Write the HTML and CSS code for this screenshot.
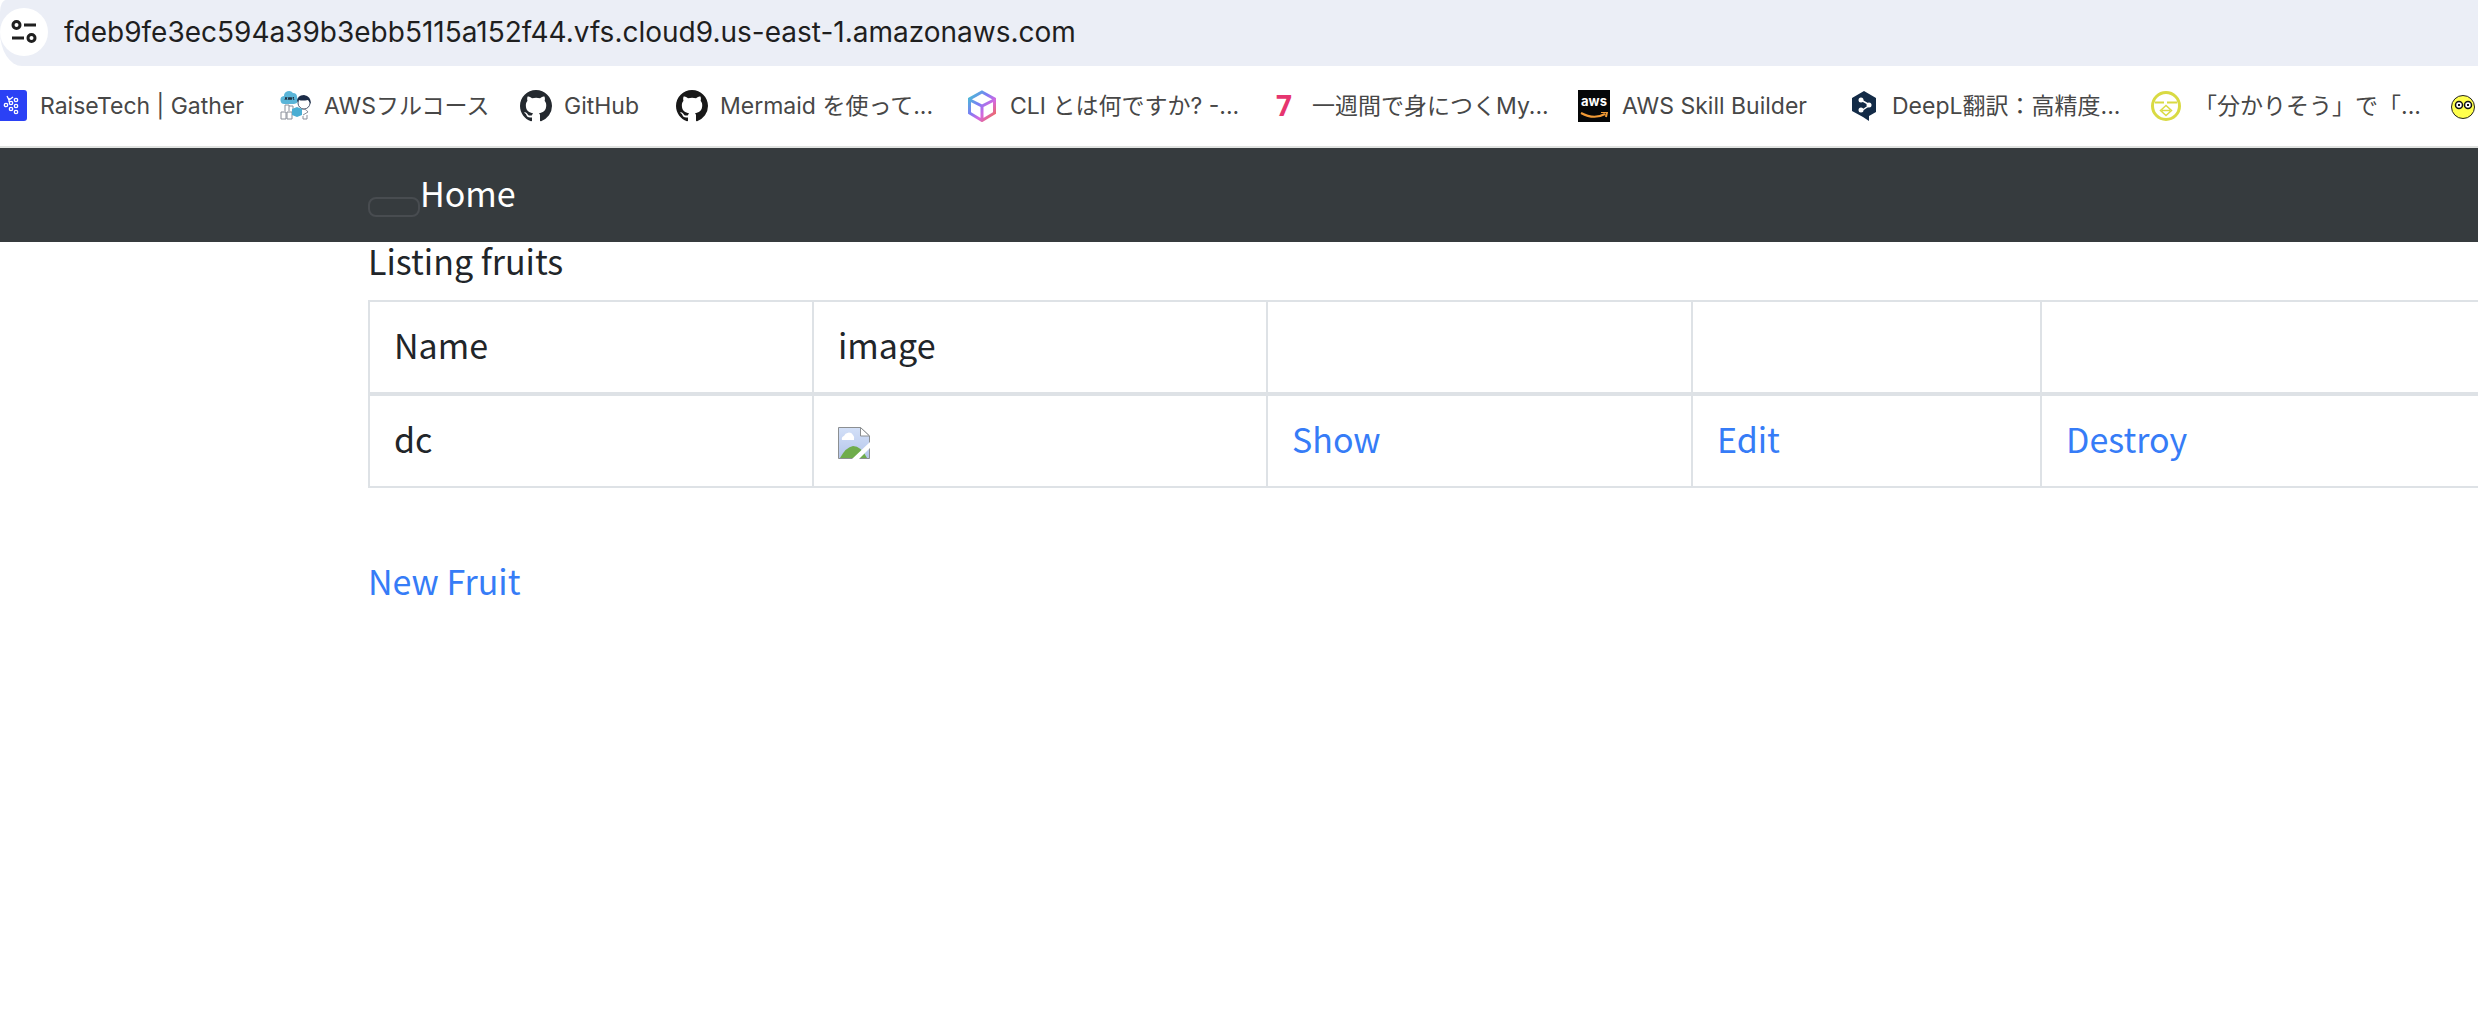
FILE: index.html
```html
<!DOCTYPE html>
<html lang="ja">
<head>
<meta charset="utf-8">
<title>Fruits</title>
<link rel="stylesheet" href="styles.css">
</head>
<body>
<svg class="defs" width="0" height="0" aria-hidden="true">
  <symbol id="octocat" viewBox="0 0 16 16"><path d="M8 0C3.58 0 0 3.58 0 8c0 3.54 2.29 6.53 5.47 7.59.4.07.55-.17.55-.38 0-.19-.01-.82-.01-1.49-2.01.37-2.53-.49-2.69-.94-.09-.23-.48-.94-.82-1.13-.28-.15-.68-.52-.01-.53.63-.01 1.08.58 1.23.82.72 1.21 1.87.87 2.33.66.07-.52.28-.87.51-1.07-1.78-.2-3.64-.89-3.64-3.95 0-.87.31-1.59.82-2.15-.08-.2-.36-1.02.08-2.12 0 0 .67-.21 2.2.82.64-.18 1.32-.27 2-.27s1.36.09 2 .27c1.53-1.04 2.2-.82 2.2-.82.44 1.1.16 1.92.08 2.12.51.56.82 1.27.82 2.15 0 3.07-1.87 3.75-3.65 3.95.29.25.54.73.54 1.48 0 1.07-.01 1.93-.01 2.2 0 .21.15.46.55.38A8 8 0 0 0 16 8c0-4.42-3.58-8-8-8z"/></symbol>
</svg>

<div class="address-bar">
  <button class="site-info" type="button" aria-label="Site information">
    <svg viewBox="0 0 26 24" width="26" height="24" fill="none" stroke="#1f1f1f" stroke-width="3"><circle cx="5.500" cy="5" r="3.500"/><path d="M13 5h12M1 18h12"/><circle cx="20.500" cy="18" r="3.500"/></svg>
  </button>
  <input class="url" type="text" aria-label="Address" value="fdeb9fe3ec594a39b3ebb5115a152f44.vfs.cloud9.us-east-1.amazonaws.com">
</div>

<nav class="bookmarks" aria-label="Bookmarks">
  <a href="#">
    <svg class="icon" viewBox="0 0 32 32"><rect x="-4" y="0" width="35" height="31" rx="3" fill="#2b41f5"/><g fill="none" stroke="#fff" stroke-width="1.300"><circle cx="10" cy="15" r="1.700"/><circle cx="15" cy="13" r="1.700"/><circle cx="15" cy="19" r="1.700"/><circle cx="20" cy="10" r="1.700"/><circle cx="20" cy="16" r="1.700"/><circle cx="20" cy="22" r="1.700"/><path d="M11 6l2 4 4-3M13 8v4"/></g></svg>
    <span>RaiseTech | Gather</span></a>
  <a href="#">
    <svg class="icon" viewBox="0 0 32 32"><path d="M5 14a4 4 0 0 1-1-8 5 5 0 0 1 9-3 4 4 0 0 1 4 4q3 6-3 7z" fill="#5bb5d8"/><path d="M5 10l1-3 1 3M8 7l1 3 1-3 1 3 1-3M14 7l-1 1 1 2" stroke="#234" fill="none"/><circle cx="24" cy="13" r="6" fill="#fff" stroke="#4a566c"/><path d="M17 12q0-7 7-7 7 1 7 9l-3-4q-6 1-9 0z" fill="#1c2c48"/><path d="M1 29v-7h5v7zM7 22h5v7H7zM5 21v-6h4v6M9 16h4v6" fill="#fff" stroke="#8a8f9a"/><path d="M12 19l5-2 5 2v6l-5 2-5-2z" fill="#4baed3"/><path d="M22 19q5 0 6 3l-5 3M23 26v3h4v-4" fill="none" stroke="#8a8f9a"/></svg>
    <span>AWSフルコース</span></a>
  <a href="#">
    <svg class="icon" viewBox="0 0 32 32" fill="#24292f"><use href="#octocat"/></svg>
    <span>GitHub</span></a>
  <a href="#">
    <svg class="icon" viewBox="0 0 32 32" fill="#181818"><use href="#octocat"/></svg>
    <span>Mermaid を使って...</span></a>
  <a href="#">
    <svg class="icon" viewBox="0 0 32 32"><defs><linearGradient id="cube" x1="0" y1="0" x2="1" y2="1"><stop offset="0" stop-color="#3fc8d0"/><stop offset=".4" stop-color="#7d7bf5"/><stop offset=".65" stop-color="#d468e0"/><stop offset="1" stop-color="#f5693f"/></linearGradient></defs><path d="M16 2l12.500 7v14L16 30.500 3.500 23V9zM4 10l12 6 12-6M16 16v14" fill="none" stroke="url(#cube)" stroke-width="3"/></svg>
    <span>CLI とは何ですか? -...</span></a>
  <a href="#">
    <span class="icon seven" aria-hidden="true">7</span>
    <span>一週間で身につくMy...</span></a>
  <a href="#">
    <span class="icon aws" aria-hidden="true">aws<svg viewBox="0 0 32 10" fill="none" stroke="#f09a36" stroke-width="2"><path d="M3 1q13 7 24 1M23 0h6l-1 5"/></svg></span>
    <span>AWS Skill Builder</span></a>
  <a href="#">
    <svg class="icon" viewBox="0 0 32 32"><path d="M16 1l12 7v14l-7 4v5l-6-4-11-6V8z" fill="#132b47"/><path d="M13 10l9 5-9 6" fill="none" stroke="#fff" stroke-width="1.500"/><g fill="#fff"><circle cx="13" cy="10" r="2.500"/><circle cx="21" cy="15" r="2.500"/><circle cx="13" cy="20" r="2.500"/></g></svg>
    <span>DeepL翻訳：高精度...</span></a>
  <a href="#">
    <svg class="icon" viewBox="0 0 32 32" fill="none" stroke="#d9da43"><circle cx="16" cy="16" r="13.500" stroke-width="3"/><path d="M5 12.500h9M17 12.500h10" stroke-width="2"/><path d="M16 15.500l-5.500 5 5.500 5 5.500-5zM12 20.500h8" stroke-width="1.500"/></svg>
    <span>「分かりそう」で「...</span></a>
  <a href="#" aria-label="Bookmark">
    <svg class="icon" viewBox="0 0 32 32"><circle cx="17" cy="17" r="11.500" fill="#ffff4d" stroke="#222"/><g fill="#fff" stroke="#111" stroke-width="1.500"><circle cx="13" cy="15" r="3.500"/><circle cx="22" cy="15" r="3.500"/></g><path d="M12 15h2M21 15h2" stroke="#111" stroke-width="2"/></svg></a>
</nav>

<header class="navbar">
  <button class="toggler" type="button" aria-label="Toggle navigation"></button>
  <a href="#">Home</a>
</header>

<main class="content">
  <h1>Listing fruits</h1>
  <table>
    <colgroup><col class="name"><col class="image"><col class="show"><col class="edit"><col></colgroup>
    <thead>
      <tr><th scope="col">Name</th><th scope="col">image</th><th></th><th></th><th></th></tr>
    </thead>
    <tbody>
      <tr>
        <td>dc</td>
        <td><svg class="missing" viewBox="0 0 32 32" role="img" aria-label="Missing image"><defs><linearGradient id="sky" x1="0" y1="0" x2="0" y2="1"><stop offset="0" stop-color="#d3e0f8"/><stop offset="1" stop-color="#b4c5ea"/></linearGradient></defs><path d="M.500.500h22l9 8.500v22.500H.500z" fill="url(#sky)" stroke="#8c8f91"/><path d="M22.500.500V9h9z" fill="#fff" stroke="#8c8f91"/><path d="M4 13a3 3 0 0 1 2-4 5 5 0 0 1 9-1q2 2 1 5z" fill="#fff"/><path d="M2 31q6-11 13-12 8 0 14 12z" fill="#6fac4b"/><path d="M14 32L32 15v6L21 32z" fill="#fff"/></svg></td>
        <td><a href="#">Show</a></td>
        <td><a href="#">Edit</a></td>
        <td><a href="#">Destroy</a></td>
      </tr>
    </tbody>
  </table>
  <a href="#">New Fruit</a>
</main>
</body>
</html>
```
FILE: styles.css
```css
* {
  box-sizing: border-box;
}

body {
  margin: 0;
  overflow-x: hidden;
  background: #fff;
  color: #212529;
  font-family: "Noto Sans CJK JP", sans-serif;
  font-size: 34px;
  line-height: 38px;
}

a {
  color: #367cf7;
  text-decoration: none;
}

.defs {
  position: absolute;
}

/* Browser chrome */
.address-bar {
  display: flex;
  align-items: center;
  gap: 16px;
  height: 66px;
  padding-bottom: 2px;
  background: #ebeef6;
  border-radius: 6px 0 0 22px / 12px 0 0 34px;
}

.site-info {
  display: flex;
  align-items: center;
  justify-content: center;
  width: 48px;
  height: 48px;
  padding: 0;
  border: 0;
  border-radius: 50%;
  background: #fff;
}

.url {
  flex: 1;
  padding: 0;
  border: 0;
  background: none;
  color: #1f1f1f;
  font: 28px Inter, sans-serif;
}

.bookmarks {
  display: grid;
  grid-template-columns: 251px 207px 123px 257px 269px 277px 237px 269px 263px 32px;
  align-items: center;
  gap: 33px;
  height: 82px;
  margin-left: -4px;
  border-bottom: 2px solid #e0e2e0;
  font: 23px/32px Inter, "Noto Sans CJK JP", sans-serif;
  white-space: nowrap;
}

.bookmarks a {
  display: flex;
  gap: 12px;
  color: #474747;
}

.icon {
  flex: none;
  width: 32px;
  height: 32px;
}

.seven {
  color: #e6356f;
  font-family: "Open Sans", sans-serif;
  font-size: 28px;
  font-weight: 700;
  line-height: 30px;
  text-align: center;
}

.aws {
  background: #050708;
  color: #fff;
  font-size: 13px;
  font-weight: 700;
  line-height: 22px;
  text-align: center;
}

.aws svg {
  display: block;
  height: 10px;
}

/* Page */
.navbar {
  display: flex;
  align-items: center;
  height: 94px;
  padding-left: 368px;
  background: #363b3e;
}

.navbar a {
  color: #fff;
  padding-bottom: 4px;
}

.toggler {
  width: 52px;
  height: 20px;
  margin-top: 24px;
  border: 2px solid #484c50;
  border-radius: 8px;
  background: none;
}

.content {
  padding-left: 368px;
}

h1 {
  margin: 0 0 20px;
  font-size: inherit;
  font-weight: 400;
}

table {
  width: 100%;
  margin-bottom: 74px;
  border-collapse: separate;
  border-spacing: 0;
  border-top: 2px solid #dee2e6;
  table-layout: fixed;
}

.name {
  width: 444px;
}

.image {
  width: 454px;
}

.show {
  width: 425px;
}

.edit {
  width: 349px;
}

th,
td {
  height: 92px;
  padding: 0 24px 4px;
  border-left: 2px solid #dee2e6;
  border-bottom: 2px solid #dee2e6;
  font-weight: 400;
  text-align: left;
}

th {
  height: 94px;
  border-bottom-width: 4px;
}

.missing {
  display: block;
  width: 32px;
  height: 32px;
  margin-top: 8px;
}
```
